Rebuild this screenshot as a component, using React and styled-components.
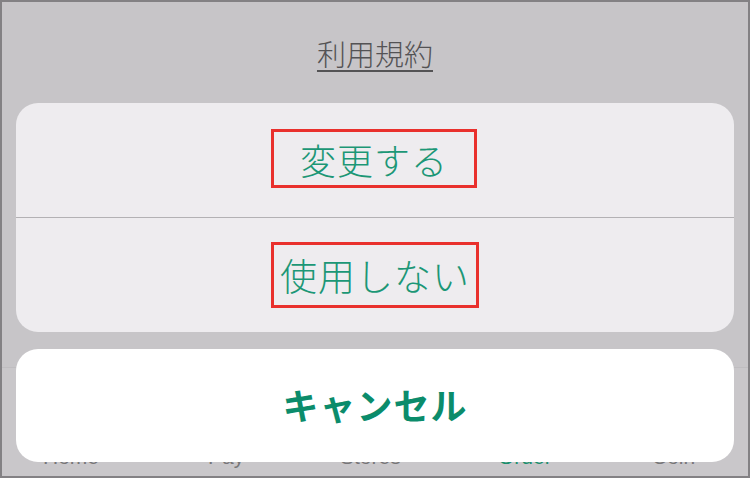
import React from "react";
import styled, { createGlobalStyle } from "styled-components";

const GlobalStyle = createGlobalStyle`
  html, body {
    margin: 0;
    padding: 0;
    background: #c7c5c8;
  }
  body {
    font-family: "Noto Sans CJK JP", "Noto Sans", sans-serif;
  }
`;

const Frame = styled.div`
  position: relative;
  width: 750px;
  height: 478px;
  box-sizing: border-box;
  border: 2px solid #838184;
  background: #c7c5c8;
  overflow: hidden;
  display: flex;
  flex-direction: column;
  padding: 0 14px;
`;

const TitleBar = styled.div`
  height: 101px;
  display: flex;
  align-items: center;
  justify-content: center;
  flex-shrink: 0;
`;

const TitleLink = styled.a`
  font-size: 29px;
  font-weight: 300;
  color: #545355;
  text-decoration: underline;
  text-underline-offset: 4px;
  text-decoration-thickness: 2px;
`;

const Group = styled.div`
  position: relative;
  z-index: 1;
  background: #eeecef;
  border-radius: 22px;
  overflow: hidden;
  display: flex;
  flex-direction: column;
`;

const Row = styled.div`
  height: ${({ h }) => h}px;
  display: flex;
  align-items: center;
  justify-content: center;
  & + & {
    border-top: 1px solid #b3b1b4;
  }
`;

const Marked = styled.span`
  display: inline-flex;
  align-items: center;
  justify-content: center;
  box-sizing: border-box;
  width: ${({ w }) => w}px;
  height: ${({ h }) => h}px;
  border: 3px solid #e9302d;
  margin-top: ${({ dy }) => dy || 0}px;
  margin-left: ${({ dx }) => dx || 0}px;
  font-size: ${({ size }) => size}px;
  font-weight: 300;
  color: #1c9776;
  line-height: 1;
  letter-spacing: 1px;
`;

const CancelCard = styled.div`
  position: relative;
  z-index: 1;
  margin-top: 17px;
  height: 113px;
  background: #ffffff;
  border-radius: 22px;
  display: flex;
  align-items: center;
  justify-content: center;
  padding-bottom: 3px;
  box-sizing: border-box;
  font-size: 36px;
  font-weight: 700;
  color: #0b8c6b;
  letter-spacing: 1px;
`;

const TabBar = styled.div`
  position: absolute;
  left: 0;
  right: 0;
  bottom: 0;
  height: 108px;
  background: #c9c7ca;
  border-top: 1px solid #bfbdc0;
  z-index: 0;
`;

const TabLabel = styled.span`
  position: absolute;
  left: ${({ x }) => x}px;
  bottom: 9px;
  font-family: "Liberation Sans", Arial, sans-serif;
  font-size: 21px;
  line-height: 1;
  color: ${({ active }) => (active ? "#1a8f6d" : "#777678")};
`;

const tabs = [
  { label: "Home", x: 41 },
  { label: "Pay", x: 206 },
  { label: "Stores", x: 338 },
  { label: "Order", x: 496, active: true },
  { label: "Coin", x: 650 },
];

export default function App() {
  return (
    <>
      <GlobalStyle />
      <Frame>
        <TitleBar>
          <TitleLink>利用規約</TitleLink>
        </TitleBar>
        <Group>
          <Row h={114}>
            <Marked w={206} h={59} size={36} dy={-3} dx={-2}>
              変更する
            </Marked>
          </Row>
          <Row h={114}>
            <Marked w={208} h={66} size={37}>
              使用しない
            </Marked>
          </Row>
        </Group>
        <CancelCard>キャンセル</CancelCard>
        <TabBar>
          {tabs.map((t) => (
            <TabLabel key={t.label} x={t.x} active={t.active}>
              {t.label}
            </TabLabel>
          ))}
        </TabBar>
      </Frame>
    </>
  );
}
